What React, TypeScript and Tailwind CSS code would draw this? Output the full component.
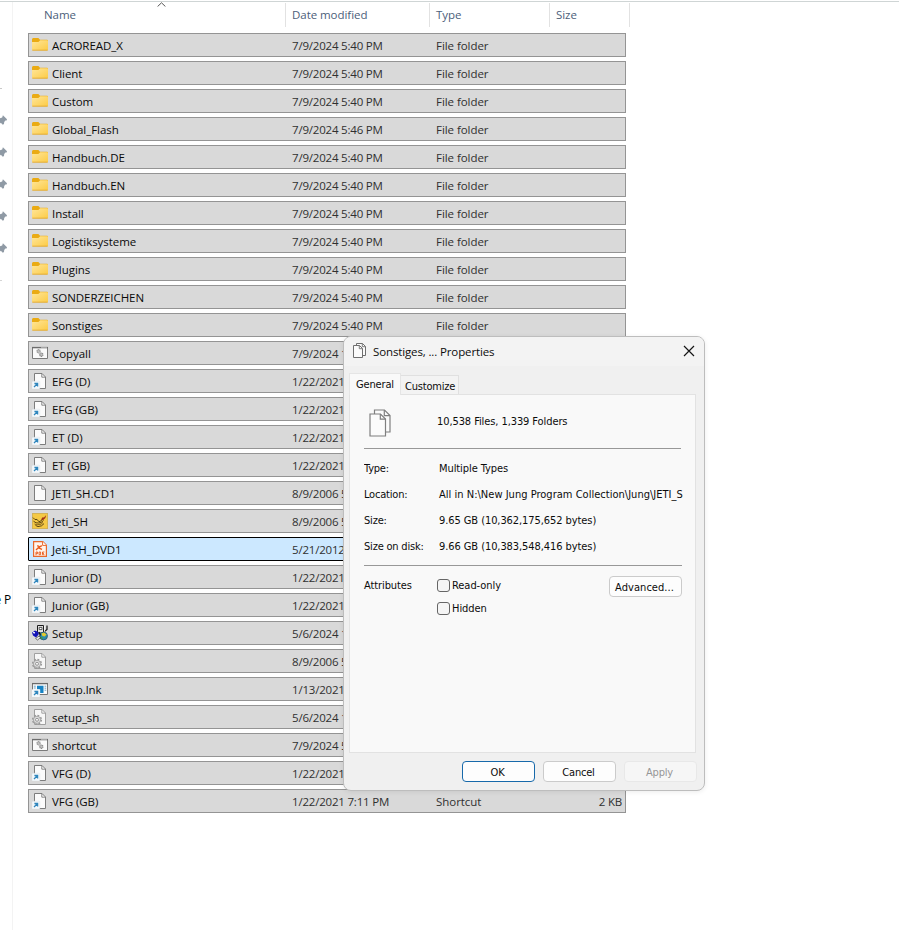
import React from "react";

type IconKind =
  | "folder"
  | "batch"
  | "shortcut"
  | "file"
  | "jeti"
  | "pdf"
  | "setup"
  | "config"
  | "setuplnk";

type Entry = { name: string; date: string; type?: string; size?: string; icon: IconKind; focused?: boolean };

const folder = (name: string, date = "7/9/2024 5:40 PM"): Entry => ({ name, date, type: "File folder", icon: "folder" });

const link = (name: string): Entry => ({ name, date: "1/22/2021", icon: "shortcut" });

const entries: Entry[] = [
  folder("ACROREAD_X"),
  folder("Client"),
  folder("Custom"),
  folder("Global_Flash", "7/9/2024 5:46 PM"),
  folder("Handbuch.DE"),
  folder("Handbuch.EN"),
  folder("Install"),
  folder("Logistiksysteme"),
  folder("Plugins"),
  folder("SONDERZEICHEN"),
  folder("Sonstiges"),
  { name: "Copyall", date: "7/9/2024 1", icon: "batch" },
  link("EFG (D)"),
  link("EFG (GB)"),
  link("ET (D)"),
  link("ET (GB)"),
  { name: "JETI_SH.CD1", date: "8/9/2006 5", icon: "file" },
  { name: "Jeti_SH", date: "8/9/2006 5", icon: "jeti" },
  { name: "Jeti-SH_DVD1", date: "5/21/2012", icon: "pdf", focused: true },
  link("Junior (D)"),
  link("Junior (GB)"),
  { name: "Setup", date: "5/6/2024 1", icon: "setup" },
  { name: "setup", date: "8/9/2006 5", icon: "config" },
  { name: "Setup.lnk", date: "1/13/2021", icon: "setuplnk" },
  { name: "setup_sh", date: "5/6/2024 1", icon: "config" },
  { name: "shortcut", date: "7/9/2024 5", icon: "batch" },
  link("VFG (D)"),
  { name: "VFG (GB)", date: "1/22/2021 7:11 PM", type: "Shortcut", size: "2 KB", icon: "shortcut" },
];

function FileIcon({ kind }: { kind: IconKind }) {
  const cls = "block h-4 w-4 shrink-0";
  switch (kind) {
    case "folder":
      return (
        <svg viewBox="0 0 16 16" className={cls}>
          <defs>
            <linearGradient id="folderFace" x1="0" y1="0" x2="1" y2="1">
              <stop offset="0" stopColor="#ffe69a" />
              <stop offset="1" stopColor="#fccb45" />
            </linearGradient>
          </defs>
          <path d="M0 2.6Q0 1.1 1.2 1.1H6.4L8 2.8H15Q16 2.8 16 3.8V8H0Z" fill="#eaab14" />
          <path d="M0 5H6.4L8.2 3.2H15.2Q16 3.2 16 4.2V12.6Q16 13.6 15 13.6H1Q0 13.6 0 12.6Z" fill="url(#folderFace)" />
          <path d="M0.3 13.2H15.7" stroke="#dda32c" strokeWidth="0.8" />
        </svg>
      );
    case "batch":
      return (
        <svg viewBox="0 0 16 16" className={cls}>
          <path d="M.5 2.5H15.5V13.5H.5Z" fill="#fafafa" stroke="#7b7b7b" />
          <path d="M0 2.6H16" stroke="#6c6c6c" strokeWidth="1.4" />
          <path d="M9.5 2.6h1M11.5 2.6h1M13.5 2.6h1" stroke="#eee" strokeWidth="1" />
          <circle cx="6.6" cy="6.2" r="1.6" fill="#c4c4c4" stroke="#999" strokeWidth="1.3" strokeDasharray="1.1 .4" />
          <circle cx="9.3" cy="9.7" r="1.6" fill="#c4c4c4" stroke="#8c8c8c" strokeWidth="1.3" strokeDasharray="1.1 .4" />
        </svg>
      );
    case "file":
    case "shortcut":
      return (
        <svg viewBox="0 0 16 16" className={cls}>
          <path d="M2.5 .5H10L13.5 4V15.5H2.5Z" fill="#fbfbfb" stroke="#7d7d7d" />
          <path d="M9.8 .5V4.2H13.5" fill="none" stroke="#7d7d7d" strokeWidth=".9" />
          {kind === "shortcut" && (
            <>
              <rect x="0" y="8.2" width="7.8" height="7.8" rx=".6" fill="#f4f8fb" stroke="#d3dde4" strokeWidth=".4" />
              <path d="M2 14L5 11M2.4 10.5H5.6V13.6" fill="none" stroke="#2f86bd" strokeWidth="1.3" />
            </>
          )}
        </svg>
      );
    case "config":
      return (
        <svg viewBox="0 0 16 16" className={cls}>
          <path d="M2.5 .5H10L13.5 4V15.5H2.5Z" fill="#f7f7f7" stroke="#a0a0a0" />
          <path d="M9.8 .5V4.2H13.5" fill="none" stroke="#999" strokeWidth=".9" />
          <circle cx="5" cy="10.8" r="4.3" fill="none" stroke="#989898" strokeWidth="1.6" strokeDasharray="1.8 1.57" />
          <circle cx="5" cy="10.8" r="3.6" fill="#dedede" stroke="#989898" strokeWidth=".8" />
          <circle cx="5" cy="10.8" r="1.5" fill="#f7f7f7" stroke="#8d8d8d" strokeWidth=".9" />
        </svg>
      );
    case "jeti":
      return (
        <svg viewBox="0 0 16 16" className={cls}>
          <path d="M.3 .3H15.7V15.7H.3Z" fill="#f5c944" stroke="#b99536" strokeWidth=".6" />
          <path d="M1 4.6L3 6.6L5 6.4L7 8.8L9.5 7.5L11 5.4M1.5 8.2L4 9.8L6.5 10L9 9.5L11.5 7.5M3.5 12.4L6 13.6L9.5 12.8L12 10.6" fill="none" stroke="#4a350c" strokeWidth=".9" />
          <path d="M2.5 11L5 11.8L9 11.2L11 9.4" fill="none" stroke="#6d4f12" strokeWidth=".8" />
          <path d="M9 6.6L10.6 4.2L12 4.4L14.2 2L13.4 5L11 7.2Z" fill="#a33317" />
        </svg>
      );
    case "pdf":
      return (
        <svg viewBox="0 0 16 16" className={cls}>
          <path d="M1.6 .6H10.8L14.4 4.2V15.4H1.6Z" fill="#fff5ed" stroke="#e9682a" strokeWidth="1.2" />
          <path d="M10.6 .6V4.4H14.4" fill="#fff" stroke="#e9682a" />
          <path d="M4 9L6 7L9.8 4.6M5.2 4.6L7.4 5.6L7 7.2L10 8.4" fill="none" stroke="#e85a1b" strokeWidth="1.4" />
          <path d="M4 14.2V11H5.6V12.7H4M7.1 11V13.7H8.6V11ZM12.4 11H10.5V13.7H12.4M10.5 12.4H12" fill="none" stroke="#e85a1b" strokeWidth=".9" />
        </svg>
      );
    case "setup":
      return (
        <svg viewBox="0 0 16 16" className={cls}>
          <path d="M5.5 .5H11.5V8H5.5Z" fill="#e4e4e4" stroke="#1c1c1c" />
          <path d="M7.2 2.4H10V4.6H7.2Z" fill="#fff" stroke="#333" strokeWidth=".8" />
          <path d="M12.5 6.5L15 4.5V.5" fill="none" stroke="#111" strokeWidth="1.2" />
          <path d="M12.6 1V6.5" stroke="#f4f4f4" strokeWidth="1" />
          <path d="M0 7.4L3 5.6L6.4 7L6.6 9.6L4 12.4L1 10.6Z" fill="#1212b8" />
          <path d="M.2 6.4L3.2 7.2L2.2 9Z" fill="#fff" />
          <circle cx="11.6" cy="11" r="3.9" fill="#2c8dac" stroke="#244a6b" strokeWidth=".7" />
          <path d="M9.4 8.4L12 7.6L14.6 9.4L12.6 11.4L10.4 11Z" fill="#e5c92c" />
          <path d="M8.4 11.6L10.6 12.4L10.4 14.4L9 13.8Z" fill="#3d9b3f" />
          <path d="M3.6 13.4L7.2 11L8.4 12.8L5.4 15Z" fill="#f0f0f0" stroke="#222" strokeWidth=".6" />
          <path d="M7 7L8.4 10.4" stroke="#111" strokeWidth="1.2" />
        </svg>
      );
    case "setuplnk":
      return (
        <svg viewBox="0 0 16 16" className={cls}>
          <path d="M.5 2.5H15.5V13.5H.5Z" fill="#fafafa" stroke="#777" />
          <path d="M0 2.6H16" stroke="#6a6a6a" strokeWidth="1.3" />
          <path d="M5 4.8H11.5V12H8.2V8.4H5Z" fill="#1683c4" />
          <path d="M12.6 5.2H14.2M12.6 7.2H14.2M12.6 9.2H14.2M1.8 5.2H3.8M1.8 7H3.8" stroke="#4a91bc" strokeWidth=".8" />
          <rect x="0" y="8.2" width="7.8" height="7.8" rx=".6" fill="#f4f8fb" />
          <path d="M2 14L5 11M2.4 10.5H5.6V13.6" fill="none" stroke="#2f86bd" strokeWidth="1.3" />
        </svg>
      );
  }
}

function Pin() {
  return (
    <svg viewBox="0 0 7 10" className="mb-[22px] block h-[10px] w-[7px]">
      <path d="M2.9 .3L7 4.2L6.6 5.4L5.4 5.6L4.2 7L4 9L2.8 9.8L.8 7.8L0 8.4V3.2L2.2 2.4Z" fill="#8f9aa5" />
    </svg>
  );
}

function Sidebar() {
  return (
    <aside className="flex h-[928px] w-[13px] shrink-0 flex-col overflow-hidden border-r border-[#f3f3f3]">
      <div className="mt-[86px] h-px w-[2px] bg-[#c9c9c9]" />
      <div className="mt-[26px] h-[160px]">
        <Pin />
        <Pin />
        <Pin />
        <Pin />
        <Pin />
      </div>
      <div className="mt-[5px] h-px w-[2px] bg-[#d5d5d5]" />
      <div className="mt-[311px] flex h-4 items-center justify-end pr-px text-[12px] leading-4 whitespace-pre text-black">
        <span className="text-[#12639b]">e</span> P
      </div>
    </aside>
  );
}

function HeaderCell({ label, className }: { label: string; className: string }) {
  return <div className={`mt-px h-6 border-r border-[#e2e2e2] leading-[24px] ${className}`}>{label}</div>;
}

function FileRow({ entry }: { entry: Entry }) {
  const look = entry.focused ? "border-black bg-[#cce8ff] rounded-[1px]" : "border-[#949494] bg-[#d9d9d9]";
  return (
    <div className={`mb-1 flex h-6 w-[598px] items-center border pl-[3px] leading-[22px] ${look}`}>
      <FileIcon kind={entry.icon} />
      <span className="ml-1 w-[240px] pt-[2px] tracking-[-0.05px] text-[#0a0a0a]">{entry.name}</span>
      <span className="w-[144px] pt-[2px] text-[#303030]">{entry.date}</span>
      <span className="w-[100px] pt-[2px] tracking-[-0.05px] text-[#303030]">{entry.type}</span>
      <span className="flex-1 pt-[2px] pr-[3px] text-right text-[#303030]">{entry.size}</span>
    </div>
  );
}

function Documents({ className }: { className: string }) {
  return (
    <svg viewBox="0 0 22 28" className={className}>
      <path d="M5.5 1H15.5L21 6.5V23H5.5Z" fill="#fbfbfb" stroke="#7f7f7f" strokeWidth="1.2" />
      <path d="M15.3 1V6.7H21" fill="none" stroke="#7f7f7f" strokeWidth="1.2" />
      <path d="M1 5H11.5L16.5 10V27H1Z" fill="#fbfbfb" stroke="#7f7f7f" strokeWidth="1.2" />
      <path d="M11.3 5V10.2H16.5" fill="none" stroke="#7f7f7f" strokeWidth="1.2" />
    </svg>
  );
}

function SmallDocuments() {
  return (
    <svg viewBox="0 0 13 15" className="h-[15px] w-[13px]">
      <path d="M3.5 2.5V.5H9.5L12.5 3.5V12.5H9.5" fill="#fbfbfb" stroke="#6f6f6f" />
      <path d="M.5 2.5H6.5L9.5 5.5V14.5H.5Z" fill="#fbfbfb" stroke="#6f6f6f" />
      <path d="M6.3 2.5V5.7H9.5M9.3 .5V3.7H12.5" fill="none" stroke="#6f6f6f" strokeWidth=".9" />
    </svg>
  );
}

function Detail({ label, value, className = "tracking-[-0.08px]" }: { label: string; value: string; className?: string }) {
  return (
    <div className="flex h-[26px] items-center">
      <span className="w-[75px] shrink-0">{label}</span>
      <span className={`whitespace-nowrap ${className}`}>{value}</span>
    </div>
  );
}

function Check({ label }: { label: string }) {
  return (
    <div className="flex h-[23px] items-center gap-[2px]">
      <span className="h-[13px] w-[13px] rounded-[3px] border border-[#666] bg-[#f5f5f5]" />
      <span className="pt-[2px] tracking-[-0.05px]">{label}</span>
    </div>
  );
}

const buttonBase = "h-[21px] w-[73px] rounded-[4px] border pt-px pr-[2px] leading-[20px]";

function PropertiesDialog() {
  return (
    <section className="absolute top-[336px] left-[343px] flex h-[455px] w-[362px] flex-col overflow-hidden rounded-[8px] border border-[#bdbdbd] bg-[#f0f0f0] font-['DejaVu_Sans_Condensed','DejaVu_Sans',sans-serif] text-[11px] tracking-[-0.2px] text-[#0c0c0c] shadow-[0_1px_5px_rgba(0,0,0,0.08)]">
      <header className="flex h-[29px] shrink-0 items-center bg-[#f3f3f3] pr-[9px] pl-[9px]">
        <div className="-mt-[2px]">
          <SmallDocuments />
        </div>
        <span className="ml-[7px] flex-1 font-['Open_Sans','Noto_Sans',sans-serif] text-[11.5px] tracking-[-0.13px]">
          Sonstiges, ... Properties
        </span>
        <svg viewBox="0 0 12 12" className="-mt-px h-3 w-3">
          <path d="M1 1L11 11M11 1L1 11" stroke="#151515" strokeWidth="1.2" />
        </svg>
      </header>
      <div className="mt-[7px] flex h-[21px] shrink-0 items-end pl-[5px]">
        <div className="relative z-10 -mb-px h-[22px] w-[52px] border border-b-0 border-[#e5e5e5] bg-[#f9f9f9] pl-[6px] leading-[21px] tracking-[-0.15px]">
          General
        </div>
        <div className="h-[19px] w-[58px] border border-b-0 border-l-0 border-[#e0e0e0] bg-[#f3f3f3] pl-[4px] leading-[21px]">
          Customize
        </div>
      </div>
      <div className="ml-[5px] flex h-[359px] w-[347px] shrink-0 flex-col border border-[#e2e2e2] bg-[#f9f9f9] pr-[14px] pl-[14px]">
        <div className="flex h-[54px] items-center border-b border-[#989898] pl-[5px]">
          <Documents className="mt-[2px] h-[28px] w-[22px]" />
          <span className="ml-[46px] pt-px tracking-[-0.09px]">10,538 Files, 1,339 Folders</span>
        </div>
        <div className="h-[116px] w-[320px] shrink-0 overflow-hidden pt-[7px]">
          <Detail label="Type:" value="Multiple Types" />
          <Detail label="Location:" value="All in N:\New Jung Program Collection\Jung\JETI_S" className="tracking-[0.02px]" />
          <Detail label="Size:" value="9.65 GB (10,362,175,652 bytes)" />
          <Detail label="Size on disk:" value="9.66 GB (10,383,548,416 bytes)" />
        </div>
        <div className="-mr-px flex border-t border-[#989898] pt-[8px]">
          <span className="w-[73px] leading-[24px] tracking-[-0.1px]">Attributes</span>
          <div className="flex-1">
            <Check label="Read-only" />
            <Check label="Hidden" />
          </div>
          <button className={`mt-[2px] border-[#cbcbcb] bg-[#fdfdfd] tracking-[0.05px] ${buttonBase}`}>Advanced...</button>
        </div>
      </div>
      <footer className="mt-[8px] flex justify-end gap-2 pr-[7px]">
        <button className={`border-[#1769aa] bg-[#fdfdfd] ${buttonBase}`}>OK</button>
        <button className={`border-[#cbcbcb] bg-[#fdfdfd] ${buttonBase}`}>Cancel</button>
        <button className={`border-[#e8e8e8] bg-[#f6f6f6] text-[#969696] ${buttonBase}`}>Apply</button>
      </footer>
    </section>
  );
}

export default function App() {
  return (
    <main className="relative h-[930px] w-[899px] overflow-hidden bg-white pt-px font-['Open_Sans','Noto_Sans',sans-serif] text-[11.5px] tracking-[-0.2px]">
      <div className="flex border-t border-[#cfd5d5]">
        <Sidebar />
        <div className="flex-1">
          <div className="flex h-[31px] tracking-[-0.05px] text-[#4c607a]">
            <HeaderCell label="Name" className="w-[273px] pl-[31px]" />
            <HeaderCell label="Date modified" className="w-[144px] pl-[6px]" />
            <HeaderCell label="Type" className="w-[120px] pl-[6px]" />
            <HeaderCell label="Size" className="w-[80px] pl-[6px]" />
          </div>
          <div className="pl-[15px]">
            {entries.map((entry) => (
              <FileRow key={entry.name} entry={entry} />
            ))}
          </div>
        </div>
      </div>
      <svg viewBox="0 0 9 5" className="absolute top-[2px] left-[157px] h-[5px] w-[9px]">
        <path d="M.6 4.5L4.5 .8L8.4 4.5" fill="none" stroke="#555" strokeWidth="1" />
      </svg>
      <PropertiesDialog />
    </main>
  );
}
